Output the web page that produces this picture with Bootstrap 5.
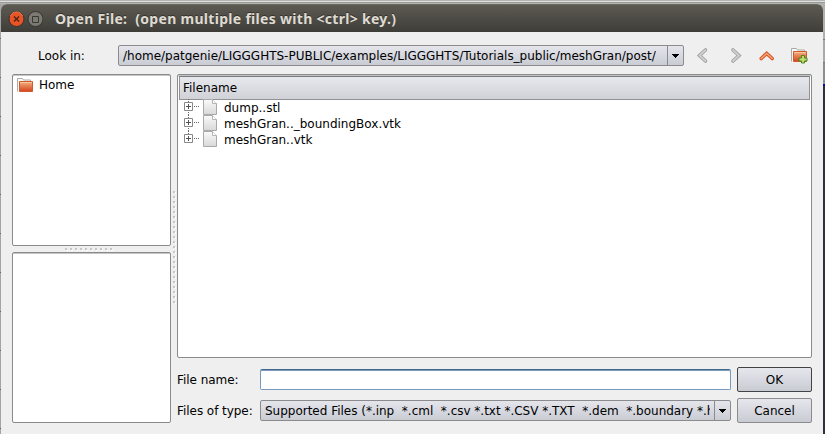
<!DOCTYPE html>
<html lang="en">
<head>
<meta charset="utf-8">
<meta name="viewport" content="width=device-width, initial-scale=1">
<title>Open File</title>
<link href="https://cdn.jsdelivr.net/npm/bootstrap@5.3.0/dist/css/bootstrap.min.css" rel="stylesheet">
<style>
body{width:825px;height:434px;margin:0;padding:4px 2px 0 1px;font:12px/16px "DejaVu Sans",sans-serif;color:#000;
 background:
 linear-gradient(#b5b5b3 0 1px,#dcdedb 1px 2px,#9b9b99 2px 3px,#b2b2b0 3px 4px) 0 0/100% 4px no-repeat,
 linear-gradient(#b0b0ae 0 39px,#777 39px 40px,#aaa 40px 62px,#777 62px 63px,#8e8e8c 63px 84px,#0a0aae 84px 86px,#2e3040 86px) right 0/20px 100% no-repeat,
 repeating-linear-gradient(#a4a4a4 0 38px,#666 38px 39px)}
.window-frame{width:822px;height:430px;background:#efefef;border-radius:6px 6px 0 0;overflow:hidden}
.titlebar{height:28px;background:linear-gradient(#5d5a52,#3e3d38);border-top:1px solid #6b695f;padding-left:7px;color:#dfdbd2;font:bold 14px/20px "Noto Sans",sans-serif;letter-spacing:.3px}
.titlebar span{margin-left:12px;white-space:pre;text-shadow:0 -1px #33322e}
.body-area{padding:13px 11px 11px;height:402px}
.look-row{height:21px;margin-bottom:8px}
.look-label{width:106px;padding-left:26px}
.combo{height:21px;border:1px solid #8b8b8e;border-radius:2px;background:linear-gradient(#e5e6ec,#caccd4);overflow:hidden}
.combo-text{padding-left:4px;white-space:pre;overflow:hidden;line-height:20px}
.combo-arrow{width:16px;border-left:1px solid #8b8b8e}
.look-combo{width:566px}
.look-combo .combo-text{letter-spacing:-.005px}
.tool-icons{padding-left:10px;gap:16px}
.up-icon{margin-left:-3px}
.pane{background:#fff;border:1px solid #8b8b8b;border-radius:2px;box-shadow:inset 0 1px #c5c5c5}
.side{width:159px}
.places{height:172px;padding:2px 4px}
.split-h{height:6px;padding-right:4px}
.split-v{width:6px}
.recent{height:171px}
.tree{height:284px;padding:1px}
.tree-head{height:24px;border:1px solid #929292;border-top-color:#77797b;background:linear-gradient(#e7e8ed,#d1d2d7);padding-left:3px;line-height:22px}
.tree-row{height:16px;padding-left:4px}
.tree-row svg{margin-top:-1px}
.tree-row svg+svg{margin-left:3px}
.tree-row span{margin-left:7px;line-height:17px}
.field-label{width:83px;white-space:nowrap;letter-spacing:-.05px}
.name-input{height:21px;border:1px solid #7699bd;border-top-color:#426a90;border-radius:2px;background:#fff;box-shadow:inset 0 1px #7c9ab6;padding:0 4px;width:471px}
.type-combo{width:471px}
.type-combo .combo-text{margin-right:4px;letter-spacing:-.01px}
.dlg-btn{width:75px;height:25px;margin-left:6px;border:1px solid #8b8b8e;border-radius:2px;background:linear-gradient(#e6e7ed,#c9cbd3);font-size:12px;line-height:24px;padding:0;color:#000}
.dlg-btn.default-btn{border-color:#424247}
.name-row{margin-top:9px}
.type-row{margin-top:6px}
.place-name{margin-left:6px}
svg{display:block;flex:none}
</style>
</head>
<body>
<svg width="0" height="0" class="position-absolute"><defs>
<linearGradient id="or" x2="0" y2="1"><stop stop-color="#f5b483"/><stop offset="1" stop-color="#d4421b"/></linearGradient>
<linearGradient id="pg" x2="0" y2="1"><stop stop-color="#fafafa"/><stop offset="1" stop-color="#d8d8d8"/></linearGradient>
<symbol id="folder" viewBox="0 0 16 16"><path d="M.5 13.500V.5h5l1 1.500h7V12" fill="#f8f8f8" stroke="#aaa"/><path d="M2.500 3.500h13v10h-13z" fill="url(#or)" stroke="#cf5a2d"/><path d="M3 4.500h12" stroke="#f8c79a"/></symbol>
<symbol id="expander" viewBox="0 0 17 16"><path d="M5.500 0v3M5.500 13v3M11 7.500h6" stroke="#666" stroke-dasharray="1 1"/><path d="M1.500 3.500h8v8h-8z" fill="#fff" stroke="#888"/><path d="M3 7.500h5M5.500 5v5" stroke="#555"/></symbol>
<symbol id="page" viewBox="0 0 14 16"><path d="M.5.5h9l4 4v11H.5z" fill="url(#pg)" stroke="#aaa"/><path d="M9.500.5v4h4" fill="#fff" stroke="#b5b5b5"/></symbol>
<symbol id="down" viewBox="0 0 7 4"><path d="M0 0h7v1H6v1H5v1H4v1H3V3H2V2H1V1H0z"/></symbol>
</defs></svg>
<main class="window-frame">
 <header class="titlebar d-flex align-items-center">
  <svg width="35" height="18" viewBox="0 0 35 18"><circle cx="8.500" cy="9" r="7.500" fill="#e75527" stroke="#38342e"/><path d="M2.500 6a6.500 6.500 0 0 1 12 0" fill="none" stroke="#f07c50"/><path d="m6 6.500 5 5m0-5-5 5" stroke="#4b2415" stroke-width="1.400"/><circle cx="27.500" cy="9" r="7.500" fill="#7c7a72" stroke="#35342f"/><path d="M24.500 6.500h6v6h-6z" fill="none" stroke="#393832"/></svg>
  <span>Open File:  (open multiple files with &lt;ctrl&gt; key.)</span>
 </header>
 <div class="body-area">
  <div class="look-row d-flex align-items-center">
   <div class="look-label">Look in:</div>
   <div class="combo look-combo d-flex"><div class="combo-text flex-grow-1">/home/patgenie/LIGGGHTS-PUBLIC/examples/LIGGGHTS/Tutorials_public/meshGran/post/</div><div class="combo-arrow d-flex flex-shrink-0 align-items-center justify-content-center"><svg width="7" height="4"><use href="#down"/></svg></div></div>
   <div class="tool-icons d-flex align-items-center">
    <svg width="18" height="18" viewBox="0 0 18 18"><path d="m11.500 3-6 5.500 6 5.500" fill="none" stroke="#a0a0a0" stroke-width="3.600" stroke-linecap="round"/><path d="m11.500 3-6 5.500 6 5.500" fill="none" stroke="#cfcfcf" stroke-width="1.800" stroke-linecap="round"/></svg>
    <svg width="18" height="18" viewBox="0 0 18 18"><path d="m5 3 6 5.500L5 14" fill="none" stroke="#a0a0a0" stroke-width="3.600" stroke-linecap="round"/><path d="m5 3 6 5.500L5 14" fill="none" stroke="#cfcfcf" stroke-width="1.800" stroke-linecap="round"/></svg>
    <svg class="up-icon" width="16" height="16" viewBox="0 0 16 16"><path d="m2.200 10.500 5.500-5 5.500 5" fill="none" stroke="#d9572b" stroke-width="3.600" stroke-linecap="round"/><path d="m2.200 10.500 5.500-5 5.500 5" fill="none" stroke="#f5a273" stroke-width="1.500" stroke-linecap="round"/></svg>
    <svg width="17" height="16" viewBox="0 0 17 16"><use href="#folder" width="16" height="16"/><path d="M10.500 7.500h3v2.500h2.500v3h-2.500v2h-3v-2H8v-3h2.500z" fill="#b8df6d" stroke="#4b8421"/></svg>
   </div>
  </div>
  <div class="d-flex">
   <aside class="side">
    <div class="pane places"><div class="d-flex align-items-center"><svg width="16" height="14" viewBox="0 0 16 14"><use href="#folder" width="16" height="16"/></svg><span class="place-name">Home</span></div></div>
    <div class="split-h d-flex justify-content-center align-items-center"><svg width="50" height="3"><path d="M0 1h50" stroke="#c6c6c6" stroke-width="2" stroke-dasharray="2 3"/><path d="M1 2.500h49" stroke="#fff" stroke-dasharray="2 3"/></svg></div>
    <div class="pane recent"></div>
   </aside>
   <div class="split-v d-flex justify-content-center align-items-center"><svg width="3" height="115"><path d="M1 0v115" stroke="#c6c6c6" stroke-width="2" stroke-dasharray="2 3"/><path d="M2.500 1v114" stroke="#fff" stroke-dasharray="2 3"/></svg></div>
   <section class="flex-grow-1">
    <div class="pane tree">
     <div class="tree-head">Filename</div>
     <div class="tree-row d-flex"><svg width="17" height="16"><use href="#expander"/></svg><svg width="14" height="16"><use href="#page"/></svg><span>dump..stl</span></div>
     <div class="tree-row d-flex"><svg width="17" height="16"><use href="#expander"/></svg><svg width="14" height="16"><use href="#page"/></svg><span>meshGran.._boundingBox.vtk</span></div>
     <div class="tree-row d-flex"><svg width="17" height="12"><use href="#expander" width="17" height="16"/></svg><svg width="14" height="16"><use href="#page"/></svg><span>meshGran..vtk</span></div>
    </div>
    <div class="name-row d-flex align-items-center"><label class="field-label" for="fname">File name:</label><input id="fname" class="name-input"><button class="btn dlg-btn default-btn">OK</button></div>
    <div class="type-row d-flex align-items-center"><div class="field-label">Files of type:</div><div class="combo type-combo d-flex"><div class="combo-text flex-grow-1">Supported Files (*.inp  *.cml  *.csv *.txt *.CSV *.TXT  *.dem  *.boundary *.h</div><div class="combo-arrow d-flex flex-shrink-0 align-items-center justify-content-center"><svg width="7" height="4"><use href="#down"/></svg></div></div><button class="btn dlg-btn">Cancel</button></div>
   </section>
  </div>
 </div>
</main>
<script src="https://cdn.jsdelivr.net/npm/bootstrap@5.3.0/dist/js/bootstrap.bundle.min.js"></script>
</body>
</html>
